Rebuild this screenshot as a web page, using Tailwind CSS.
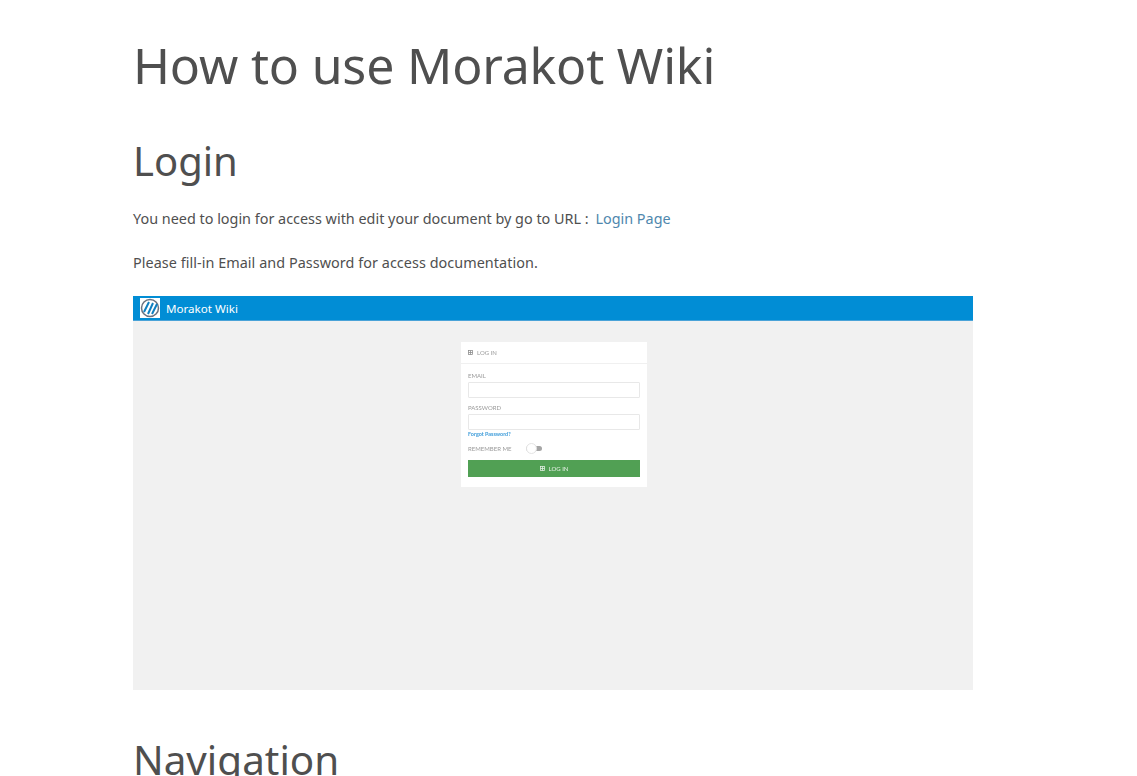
<!DOCTYPE html>
<html lang="en">
<head>
<meta charset="utf-8">
<title>How to use Morakot Wiki</title>
<script src="https://cdn.jsdelivr.net/npm/@tailwindcss/browser@4"></script>
</head>
<body class="bg-white">
<main class="h-[776px] overflow-hidden font-['Noto_Sans',sans-serif] text-[#4f4f4f]">
  <div class="ml-[133px] w-[840px]">
    <h1 class="pt-[35px] text-[50px] leading-[60px] font-normal tracking-[-0.18px]">How to use Morakot Wiki</h1>
    <h2 class="mt-[40px] text-[40px] leading-[52px] font-normal">Login</h2>
    <p class="mt-[21px] text-[14.4px] leading-[22px]">You need to login for access with edit your document by go to URL : <a class="ml-[3px] text-[#4f87ad]" href="#">Login Page</a></p>
    <p class="mt-[22px] text-[14.4px] leading-[22px] tracking-[0.05px]">Please fill-in Email and Password for access documentation.</p>
    <div class="mt-[22px] flex h-[394px] flex-col bg-[#f1f1f1]">
      <div class="flex h-[25px] shrink-0 items-center gap-[6px] border-b border-[#4aa3d8] bg-[#018dd5] pl-[7px] text-[11.6px] text-white">
        <svg class="h-[20px] w-[20px] shrink-0 bg-white" viewBox="0 0 20 20" fill="none">
          <circle cx="10" cy="10" r="8.5" stroke="#6b7280" stroke-width="1.5"/>
          <path d="M4 14 9 4M8 16 13 5M12 16 17 6" stroke="#0f7fc0" stroke-width="2"/>
        </svg>
        <span class="pt-[1px]">Morakot Wiki</span>
      </div>
      <div class="flex flex-1 justify-center pt-[21px] pl-[2px]">
        <div class="h-[145px] w-[186px] bg-white font-['Lato',sans-serif] text-[#9a9a9a] blur-[0.3px]">
          <div class="flex h-[22px] items-center gap-[4px] border-b border-[#f0f0f0] pl-[7px] text-[6px]">
            <svg class="h-[5px] w-[5px]" viewBox="0 0 10 10" fill="none" stroke="#888" stroke-width="1.5"><rect x="1" y="1" width="8" height="8"/><path d="M5 1v8M1 5h8"/></svg>
            <span>LOG IN</span>
          </div>
          <div class="px-[7px]">
            <div class="mt-[7px] h-[9px] text-[6px] leading-[9px]">EMAIL</div>
            <div class="mt-[2px] h-[16px] rounded-[1px] border border-[#e8e8e8]"></div>
            <div class="mt-[5px] h-[9px] text-[6px] leading-[9px]">PASSWORD</div>
            <div class="mt-[2px] h-[16px] rounded-[1px] border border-[#e8e8e8]"></div>
            <div class="mt-[1px] h-[7px] text-[5.4px] leading-[7px] font-bold text-[#3a9ad9]">Forgot Password?</div>
            <div class="mt-[5px] flex h-[11px] items-center text-[6px]">
              <span class="w-[58px]">REMEMBER ME</span>
              <span class="relative block h-[5px] w-[16px] rounded-full bg-[#a5a5a5]">
                <span class="absolute top-[-3px] left-0 h-[11px] w-[11px] rounded-full border border-[#e4e4e4] bg-white"></span>
              </span>
            </div>
            <div class="mt-[6px] flex h-[17px] items-center justify-center gap-[4px] bg-[#51a054] text-[6px] text-[#e8f2e8]">
              <svg class="h-[5px] w-[5px]" viewBox="0 0 10 10" fill="none" stroke="#e8f2e8" stroke-width="1.5"><rect x="1" y="1" width="8" height="8"/><path d="M5 1v8M1 5h8"/></svg>
              <span>LOG IN</span>
            </div>
          </div>
        </div>
      </div>
    </div>
    <h2 class="mt-[44px] text-[40.4px] leading-[52px] font-normal">Navigation</h2>
  </div>
</main>
</body>
</html>
